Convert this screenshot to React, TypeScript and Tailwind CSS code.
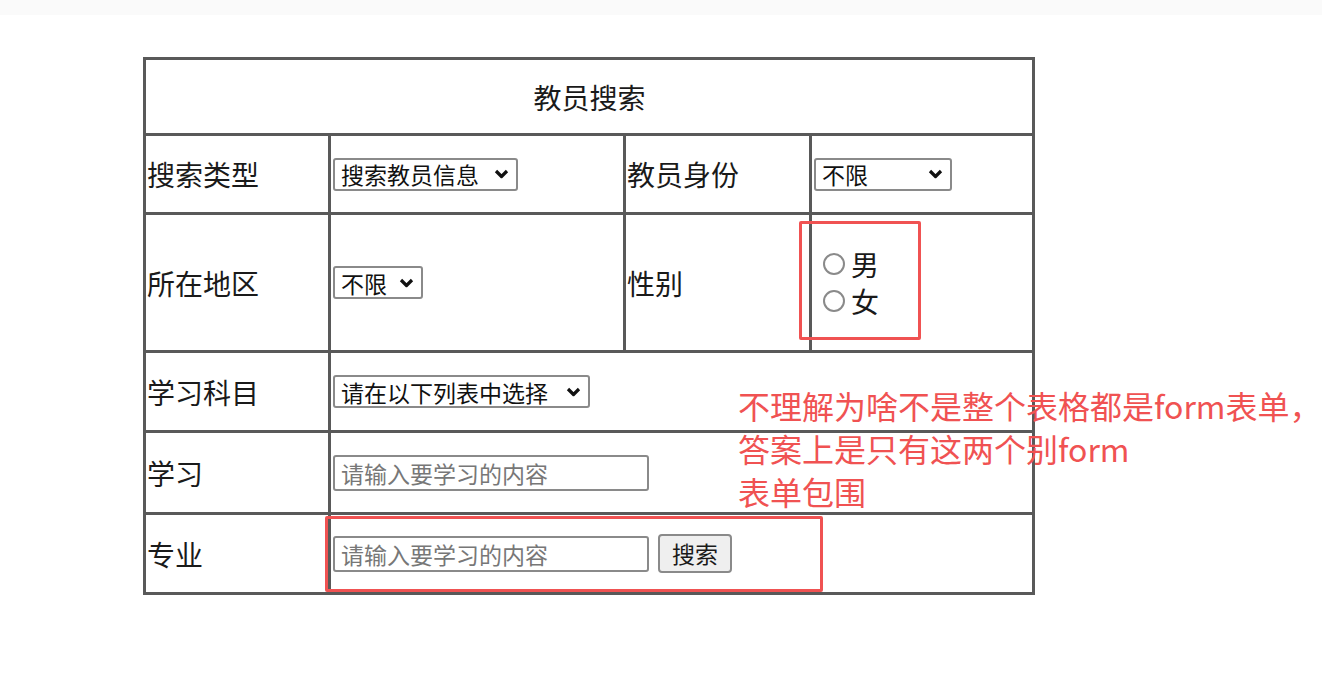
import React from 'react';

const Chevron = () => (
    <svg className="shrink-0" width="15" height="10" viewBox="0 0 15 10" fill="none" stroke="#111" strokeWidth="3.2" strokeLinejoin="round">
        <path d="M2 2 L7.5 7.5 L13 2"/>
    </svg>
);

type SelectProps = {
    width: string;
    options: string[];
};

const FakeSelect: React.FC<SelectProps> = ({ width, options }) => (
    <div className={`inline-flex items-center h-[33px] border-[2px] border-[#8a8a8a] rounded-[3px] pl-[6px] pr-[7px] bg-white ${width}`}>
        <select className="appearance-none flex-1 min-w-0 bg-transparent outline-none text-[23px] leading-[28px] text-[#111]">
            {options.map((o) => (
                <option key={o}>{o}</option>
            ))}
        </select>
        <Chevron/>
    </div>
);

const Cell: React.FC<{ className?: string; children?: React.ReactNode }> = ({ className = '', children }) => (
    <div className={`bg-white flex items-center pl-[1px] ${className}`}>{children}</div>
);

export default function App() {
    return (
        <div className="relative w-full h-[678px] bg-white overflow-hidden font-['Noto_Sans_CJK_SC','Microsoft_YaHei',sans-serif] text-[#1a1a1a]">
            <div className="h-[15px] bg-[#fafafa]"></div>

            <div className="ml-[143px] mt-[42px] w-fit grid grid-cols-[182px_292px_183px_220px] grid-rows-[73px_76px_135px_77px_79px_77px] gap-[3px] bg-[#595959] border-[3px] border-[#595959] text-[28px] leading-[36px]">
                <Cell className="col-span-4 justify-center">教员搜索</Cell>

                <Cell>搜索类型</Cell>
                <Cell className="pl-[2px]">
                    <FakeSelect width="w-[185px]" options={['搜索教员信息', '搜索学员信息']}/>
                </Cell>
                <Cell>教员身份</Cell>
                <Cell className="pl-[2px]">
                    <FakeSelect width="w-[138px]" options={['不限', '在职教师', '在校学生']}/>
                </Cell>

                <Cell>所在地区</Cell>
                <Cell className="pl-[2px]">
                    <FakeSelect width="w-[90px]" options={['不限']}/>
                </Cell>
                <Cell>性别</Cell>
                <Cell className="pl-[11px]">
                    <div className="flex flex-col">
                        <label className="flex items-center gap-[6px] h-[37px]">
                            <input type="radio" name="sex" className="appearance-none w-[22px] h-[22px] rounded-full border-[2px] border-[#8a8a8a] bg-white"/>
                            <span>男</span>
                        </label>
                        <label className="flex items-center gap-[6px] h-[37px]">
                            <input type="radio" name="sex" className="appearance-none w-[22px] h-[22px] rounded-full border-[2px] border-[#8a8a8a] bg-white"/>
                            <span>女</span>
                        </label>
                    </div>
                </Cell>

                <Cell>学习科目</Cell>
                <Cell className="col-span-3 pl-[2px]">
                    <FakeSelect width="w-[257px]" options={['请在以下列表中选择']}/>
                </Cell>

                <Cell>学习</Cell>
                <Cell className="col-span-3 pl-[2px]">
                    <input
                        type="text"
                        placeholder="请输入要学习的内容"
                        className="w-[316px] h-[36px] border-[2px] border-[#8a8a8a] rounded-[3px] px-[6px] text-[23px] outline-none placeholder:text-[#777]"
                    />
                </Cell>

                <Cell>专业</Cell>
                <Cell className="col-span-3 pl-[2px]">
                    <form className="flex items-center gap-[9px]">
                        <input
                            type="text"
                            placeholder="请输入要学习的内容"
                            className="w-[316px] h-[36px] border-[2px] border-[#8a8a8a] rounded-[3px] px-[6px] text-[23px] outline-none placeholder:text-[#777]"
                        />
                        <button type="button" className="w-[74px] h-[39px] bg-[#efefef] border-[2px] border-[#8a8a8a] rounded-[4px] text-[23px] leading-none">
                            搜索
                        </button>
                    </form>
                </Cell>
            </div>

            {/* annotations */}
            <div className="absolute left-[799px] top-[221px] w-[122px] h-[119px] border-[3px] border-[#f05252] rounded-[2px]"></div>
            <div className="absolute left-[325px] top-[516px] w-[498px] h-[76px] border-[3px] border-[#f05252] rounded-[2px]"></div>
            <div className="absolute left-[738px] top-[384px] whitespace-nowrap text-[32px] leading-[43px] text-[#f05252]">
                不理解为啥不是整个表格都是form表单，<br/>
                答案上是只有这两个别form<br/>
                表单包围
            </div>
        </div>
    );
}
